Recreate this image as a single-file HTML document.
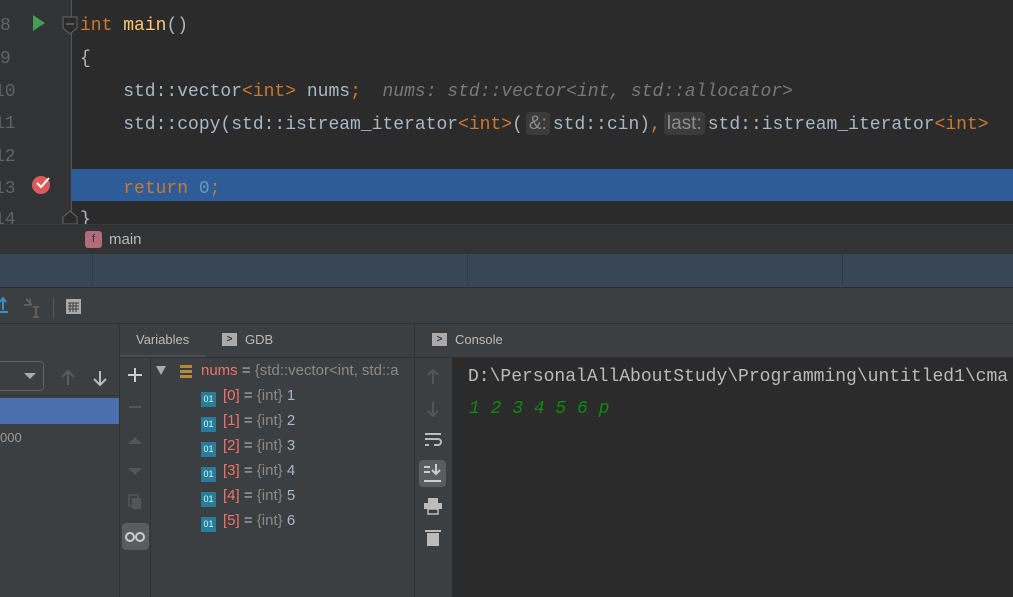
<!DOCTYPE html>
<html><head><meta charset="utf-8"><style>
*{margin:0;padding:0;box-sizing:border-box}
body{width:1013px;height:597px;overflow:hidden;background:#3c3f41;position:relative;font-family:"Liberation Sans",sans-serif}
.abs{position:absolute}
.code{font-family:"Liberation Mono",monospace;font-size:18px;color:#a9b7c6;white-space:pre;position:absolute;left:80px;line-height:20px}
.ln{position:absolute;font-family:"Liberation Mono",monospace;font-size:18px;color:#606366;line-height:20px}
.kw{color:#cc7832}.fn{color:#ffc66d}.num{color:#6897bb}.hint{color:#787878;font-style:italic}
.chip{background:#3b3b3b;color:#8c8c8c;font-family:"Liberation Sans",sans-serif;font-size:19px;border-radius:4px;padding:1px 3px;margin:0 3px}
.var{position:absolute;left:201px;font-size:15px;color:#a9b7c6;white-space:nowrap}
.ic{display:inline-block;width:15px;height:15px;background:#2a7d9a;color:#cfe;font-size:9px;line-height:15px;text-align:center;margin-right:7px;vertical-align:-2px}
.r{color:#f0736a}.g{color:#8a8a8a}
</style></head><body>
<div class="abs" style="left:0;top:0;width:1013px;height:224px;background:#2b2b2b"></div>
<div class="abs" style="left:0;top:0;width:71px;height:224px;background:#313335"></div>
<div class="abs" style="left:71px;top:0;width:1px;height:224px;background:#555"></div>
<div class="abs" style="left:71px;top:169px;width:942px;height:32px;background:#2d5c99"></div>
<div class="ln" style="left:0;top:16px">8</div>
<div class="ln" style="left:0;top:49px">9</div>
<div class="ln" style="left:-6px;top:82px">10</div>
<div class="ln" style="left:-6px;top:114px">11</div>
<div class="ln" style="left:-6px;top:147px">12</div>
<div class="ln" style="left:-6px;top:179px">13</div>
<div class="ln" style="left:-6px;top:210px">14</div>
<svg class="abs" style="left:31px;top:14px" width="16" height="18"><polygon points="2,1 14,9 2,17" fill="#499c54"/></svg>
<svg class="abs" style="left:31px;top:174px" width="22" height="22"><circle cx="10" cy="11" r="9" fill="#db5c5c"/><path d="M6 9l4 4 8-9" stroke="#fff" stroke-width="2" fill="none"/></svg>
<svg class="abs" style="left:62px;top:16px" width="16" height="20"><path d="M1 1h14v11l-7 6-7-6z" fill="#2b2b2b" stroke="#666"/><path d="M4 8h8" stroke="#888"/></svg>
<svg class="abs" style="left:62px;top:210px" width="16" height="14"><path d="M1 14V7l7-6 7 6v7z" fill="#2b2b2b" stroke="#666"/></svg>
<div class="code" style="top:16px"><span class="kw">int</span> <span class="fn">main</span>()</div>
<div class="code" style="top:49px">{</div>
<div class="code" style="top:82px">    std::vector<span class="kw">&lt;int&gt;</span> nums<span class="kw">;</span>  <span class="hint">nums: std::vector&lt;int, std::allocator&gt;</span></div>
<div class="code" style="top:114px">    std::copy(std::istream_iterator<span class="kw">&lt;int&gt;</span>(<span class="chip">&amp;:</span>std::cin)<span class="kw">,</span><span class="chip">last:</span>std::istream_iterator<span class="kw">&lt;int&gt;</span></div>
<div class="code" style="top:179px">    <span class="kw">return</span> <span class="num">0</span><span class="kw">;</span></div>
<div class="code" style="top:210px">}</div>
<div class="abs" style="left:0;top:224px;width:1013px;height:30px;background:#313335;border-top:1px solid #3a3a3a"></div>
<div class="abs" style="left:85px;top:231px;width:17px;height:17px;background:#b16b7a;border-radius:3px;color:#333;font-size:11px;text-align:center;line-height:17px">f</div>
<div class="abs" style="left:109px;top:231px;font-size:15px;color:#bbb">main</div>
<div class="abs" style="left:0;top:254px;width:1013px;height:34px;background:#394655;border-bottom:1px solid #2b2b2b"></div>
<div class="abs" style="left:92px;top:254px;width:1px;height:34px;background:#2f3a46"></div>
<div class="abs" style="left:467px;top:254px;width:1px;height:34px;background:#2f3a46"></div>
<div class="abs" style="left:842px;top:254px;width:1px;height:34px;background:#2f3a46"></div>
<svg class="abs" style="left:0;top:295px" width="90" height="24"><path d="M3 3v12M0 7l3-4 3 4M0 17h8" stroke="#3592c4" stroke-width="2" fill="none"/><path d="M26 4l6 6M30 4v6h-6M36 12v10M33 12h6M33 22h6" stroke="#666" stroke-width="1.5" fill="none"/><rect x="53" y="2" width="1" height="22" fill="#555"/><rect x="66" y="4" width="15" height="15" fill="#aaa"/><path d="M68 8h11M68 11h11M68 14h11M70 8v9M73 8v9M76 8v9" stroke="#3c3f41"/></svg>
<div class="abs" style="left:0;top:323px;width:1013px;height:1px;background:#323232"></div>
<div class="abs" style="left:0;top:361px;width:44px;height:30px;border:1px solid #646464;border-left:none;border-radius:0 4px 4px 0"></div>
<svg class="abs" style="left:24px;top:370px" width="90" height="16"><polygon points="0,3 12,3 6,9" fill="#aaa"/><path d="M44 1v14M38 7l6-6 6 6" stroke="#5c5c5c" stroke-width="2" fill="none"/><path d="M76 1v14M70 9l6 6 6-6" stroke="#bbb" stroke-width="2" fill="none"/></svg>
<div class="abs" style="left:0;top:395px;width:119px;height:1px;background:#323232"></div>
<div class="abs" style="left:0;top:398px;width:119px;height:26px;background:#4b6eaf"></div>
<div class="abs" style="left:0;top:430px;font-size:13px;color:#999">000</div>
<div class="abs" style="left:119px;top:323px;width:1px;height:274px;background:#323232"></div>
<div class="abs" style="left:136px;top:332px;font-size:13px;color:#bbb">Variables</div>
<div class="abs" style="left:120px;top:355px;width:86px;height:3px;background:#4a4d50"></div>
<div class="abs" style="left:120px;top:357px;width:294px;height:1px;background:#323232"></div>
<div class="abs" style="left:222px;top:333px;width:15px;height:13px;background:#aaa;color:#333;font-size:10px;font-weight:bold;text-align:center;line-height:13px">&gt;</div>
<div class="abs" style="left:245px;top:332px;font-size:13px;color:#bbb">GDB</div>
<div class="abs" style="left:150px;top:358px;width:1px;height:239px;background:#323232"></div>
<svg class="abs" style="left:120px;top:360px" width="30" height="192"><path d="M15 8v14M8 15h14" stroke="#ccc" stroke-width="2"/><path d="M9 47h12" stroke="#555" stroke-width="2"/><polygon points="8,84 22,84 15,77" fill="#555"/><polygon points="8,108 22,108 15,115" fill="#555"/><rect x="9" y="135" width="9" height="11" fill="none" stroke="#555" stroke-width="1.5"/><rect x="12" y="138" width="9" height="11" fill="#555"/><rect x="2" y="163" width="27" height="27" rx="4" fill="#5a5d60"/><circle cx="10" cy="177" r="4" fill="none" stroke="#ccc" stroke-width="2"/><circle cx="20" cy="177" r="4" fill="none" stroke="#ccc" stroke-width="2"/></svg>
<svg class="abs" style="left:155px;top:364px" width="40" height="16"><polygon points="1,2 11,2 6,11" fill="#aaa"/><rect x="25" y="1" width="12" height="3" fill="#b08a3e"/><rect x="25" y="6" width="12" height="3" fill="#b08a3e"/><rect x="25" y="11" width="12" height="3" fill="#b08a3e"/></svg>
<div class="var" style="top:362px"><span class="r">nums</span> = <span class="g">{std::vector&lt;int, std::a</span></div>
<div class="var" style="top:387px"><span class="ic">01</span><span class="r">[0]</span> = <span class="g">{int}</span> 1</div>
<div class="var" style="top:412px"><span class="ic">01</span><span class="r">[1]</span> = <span class="g">{int}</span> 2</div>
<div class="var" style="top:437px"><span class="ic">01</span><span class="r">[2]</span> = <span class="g">{int}</span> 3</div>
<div class="var" style="top:462px"><span class="ic">01</span><span class="r">[3]</span> = <span class="g">{int}</span> 4</div>
<div class="var" style="top:487px"><span class="ic">01</span><span class="r">[4]</span> = <span class="g">{int}</span> 5</div>
<div class="var" style="top:512px"><span class="ic">01</span><span class="r">[5]</span> = <span class="g">{int}</span> 6</div>
<div class="abs" style="left:414px;top:323px;width:1px;height:274px;background:#323232"></div>
<div class="abs" style="left:432px;top:333px;width:15px;height:13px;background:#aaa;color:#333;font-size:10px;font-weight:bold;text-align:center;line-height:13px">&gt;</div>
<div class="abs" style="left:455px;top:332px;font-size:13px;color:#bbb">Console</div>
<div class="abs" style="left:415px;top:357px;width:598px;height:1px;background:#323232"></div>
<div class="abs" style="left:452px;top:358px;width:561px;height:239px;background:#2b2b2b"></div>
<svg class="abs" style="left:418px;top:362px" width="32" height="190"><path d="M15 8v14M10 13l5-5 5 5" stroke="#555" stroke-width="2" fill="none"/><path d="M15 40v14M10 49l5 5 5-5" stroke="#555" stroke-width="2" fill="none"/><path d="M7 72h16M7 77h13a3 3 0 010 6h-4M7 83h4" stroke="#bbb" stroke-width="2" fill="none"/><rect x="1" y="98" width="27" height="27" rx="4" fill="#5a5d60"/><path d="M6 105h6M6 110h6M6 119h17M18 102v10M14 108l4 4 4-4" stroke="#ccc" stroke-width="2" fill="none"/><rect x="10" y="136" width="10" height="5" fill="#bbb"/><rect x="6" y="141" width="18" height="6" fill="#bbb"/><rect x="10" y="147" width="10" height="5" fill="none" stroke="#bbb" stroke-width="1.5"/><rect x="7" y="168" width="16" height="2" fill="#bbb"/><rect x="9" y="171" width="12" height="13" fill="#bbb"/></svg>
<div class="abs" style="left:468px;top:367px;font-family:'Liberation Mono',monospace;font-size:18px;color:#bbb;white-space:pre">D:\PersonalAllAboutStudy\Programming\untitled1\cma</div>
<div class="abs" style="left:469px;top:399px;font-family:'Liberation Mono',monospace;font-size:18px;color:#0d8a0d;font-style:italic;white-space:pre">1 2 3 4 5 6 p</div>
</body></html>
